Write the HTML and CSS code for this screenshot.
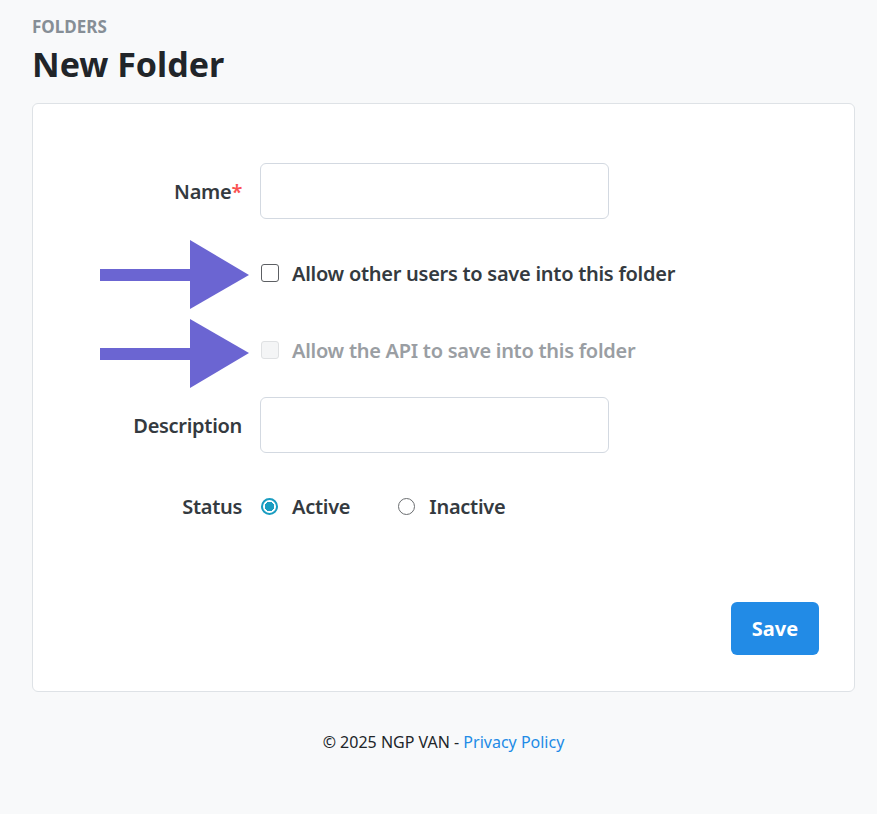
FILE: index.html
```html
<!DOCTYPE html>
<html>
<head>
<meta charset="utf-8">
<link rel="stylesheet" href="styles.css">
</head>
<body>
<div class="page">
  <header class="head">
    <div class="eyebrow">FOLDERS</div>
    <h1 class="title">New Folder</h1>
  </header>
  <section class="card">
    <svg class="arrows" width="230" height="300" viewBox="0 0 230 300">
      <rect x="67" y="165" width="91" height="12" fill="#6b65d2"/>
      <polygon points="157,136 216,171 157,205" fill="#6b65d2"/>
      <rect x="67" y="244" width="91" height="12" fill="#6b65d2"/>
      <polygon points="157,215 216,249 157,284" fill="#6b65d2"/>
    </svg>
    <form class="form">
      <div class="row row-name">
        <label class="label">Name<span class="req">*</span></label>
        <div class="control"><input class="text-input" type="text"></div>
      </div>
      <div class="row row-check1">
        <div class="label"></div>
        <label class="check"><input type="checkbox" class="cb"><span>Allow other users to save into this folder</span></label>
      </div>
      <div class="row row-check2">
        <div class="label"></div>
        <label class="check disabled"><input type="checkbox" class="cb" disabled><span>Allow the API to save into this folder</span></label>
      </div>
      <div class="row row-desc">
        <label class="label">Description</label>
        <div class="control"><input class="text-input" type="text"></div>
      </div>
      <div class="row row-status">
        <label class="label">Status</label>
        <div class="radios">
          <label class="radio"><input type="radio" name="s" class="rb" checked><span>Active</span></label>
          <label class="radio"><input type="radio" name="s" class="rb"><span>Inactive</span></label>
        </div>
      </div>
      <div class="actions">
        <button type="button" class="btn">Save</button>
      </div>
    </form>
  </section>
  <footer class="footer">© 2025 NGP VAN - <a class="link" href="#">Privacy Policy</a></footer>
</div>
</body>
</html>
```

FILE: styles.css
```css
* { box-sizing: border-box; }
html, body { margin: 0; padding: 0; }
body {
  background: #f8f9fa;
  font-family: "Noto Sans", "Open Sans", sans-serif;
  color: #212529;
}
.page { padding: 0 22px 0 32px; }
.head { padding-top: 16px; }
.eyebrow {
  font-size: 17px;
  font-weight: 700;
  color: #868e96;
  line-height: 22px;
}
.title {
  margin: 4px 0 0;
  font-size: 34px;
  font-weight: 700;
  line-height: 44px;
  color: #212529;
}
.card {
  position: relative;
  margin-top: 17px;
  background: #fff;
  border: 1px solid #dee2e6;
  border-radius: 6px;
  padding: 59px 35px 36px 0;
  height: 589px;
}
.arrows { position: absolute; left: 0; top: 0; pointer-events: none; }
.form { display: flex; flex-direction: column; }
.row {
  display: grid;
  grid-template-columns: 209px 1fr;
  column-gap: 18px;
  align-items: center;
}
.label {
  text-align: right;
  font-size: 20px;
  font-weight: 600;
  color: #343a40;
  letter-spacing: -0.3px;
}
.req { color: #fa5252; }
.text-input {
  width: 349px;
  height: 56px;
  border: 1px solid #d3d9e1;
  border-radius: 6px;
  background: #fff;
  margin: 0;
  display: block;
}
.row-name { height: 56px; }
.row-check1 { height: 30px; margin-top: 39px; }
.row-check2 { height: 30px; margin-top: 47px; }
.row-desc { height: 56px; margin-top: 32px; }
.row-status { height: 30px; margin-top: 38px; }
.check, .radio {
  display: flex;
  align-items: center;
  font-size: 20px;
  font-weight: 600;
  color: #343a40;
  letter-spacing: -0.27px;
}
.check.disabled { color: #9a9ea3; }
.cb {
  appearance: none;
  -webkit-appearance: none;
  width: 18px;
  height: 18px;
  margin: 0 13px 0 1px;
  border: 1.5px solid #5c5f63;
  border-radius: 3px;
  background: #fff;
}
.cb:disabled { border-color: #dfe1e3; background: #f4f5f6; }
.radios { display: flex; align-items: center; gap: 47px; }
.rb {
  appearance: none;
  -webkit-appearance: none;
  width: 17px;
  height: 17px;
  margin: 0 14px 0 1px;
  border: 1.5px solid #6a6d70;
  border-radius: 50%;
  background: #fff;
}
.rb:checked {
  border: 2px solid #1a9dc1;
  background: radial-gradient(circle, #1a9dc1 0 4.5px, #fff 5px);
}
.actions { display: flex; justify-content: flex-end; margin-top: 81px; }
.btn {
  width: 88px;
  height: 53px;
  border: 0;
  border-radius: 6px;
  background: #228be6;
  color: #fff;
  font-family: inherit;
  font-size: 20px;
  font-weight: 700;
}
.footer {
  text-align: center;
  margin-top: 39px;
  font-size: 16px;
  color: #212529;
  line-height: 22px;
}
.link { color: #228be6; text-decoration: none; }
```
